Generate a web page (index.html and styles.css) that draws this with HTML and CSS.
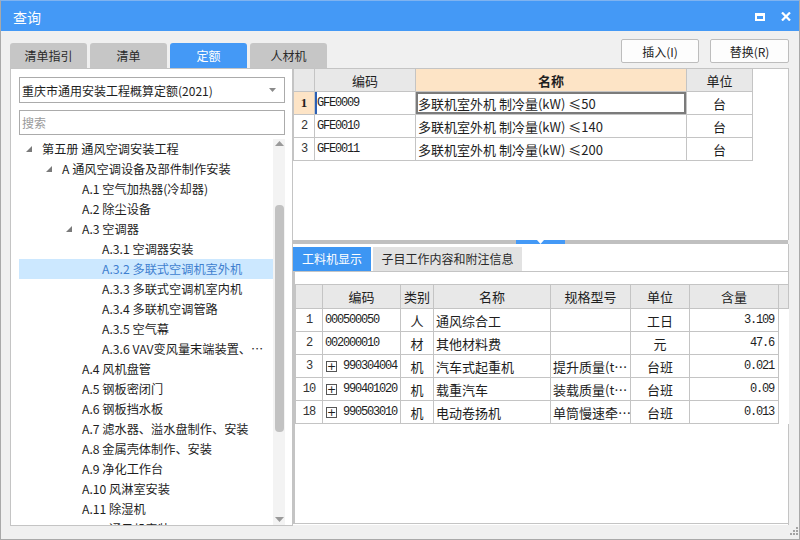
FILE: index.html
```html
<!DOCTYPE html>
<html lang="zh">
<head>
<meta charset="utf-8">
<title>查询</title>
<link rel="stylesheet" href="styles.css">
</head>
<body>
<div class="window">
  <div class="titlebar">
    <span class="title">查询</span>
    <div class="title-icons">
      <svg class="ico-max" width="10" height="8" viewBox="0 0 10 8"><rect x="0" y="0" width="10" height="8" fill="#fff"/><rect x="2" y="3" width="6" height="3" fill="#4499f6"/></svg>
      <svg class="ico-close" width="10" height="9" viewBox="0 0 10 9"><path d="M1 0.5 L9 8.5 M9 0.5 L1 8.5" stroke="#fff" stroke-width="2.2" fill="none"/></svg>
    </div>
  </div>
  <div class="body">
    <div class="toprow">
      <div class="tabs">
        <div class="tab">清单指引</div>
        <div class="tab">清单</div>
        <div class="tab active">定额</div>
        <div class="tab">人材机</div>
      </div>
      <div class="buttons">
        <button class="btn btn-insert">插入(I)</button>
        <button class="btn btn-replace">替换(R)</button>
      </div>
    </div>
    <div class="main">
      <div class="left">
        <div class="select">
          <span>重庆市通用安装工程概算定额(2021)</span>
          <svg class="sel-arrow" width="7" height="4" viewBox="0 0 7 4"><path d="M0 0 H7 L3.5 4 Z" fill="#8a8a8a"/></svg>
        </div>
        <div class="search">搜索</div>
        <div class="tree">
          <div class="tree-list">
            <div class="node l0"><span class="tri"></span>第五册 通风空调安装工程</div>
            <div class="node l1"><span class="tri"></span>A 通风空调设备及部件制作安装</div>
            <div class="node l2">A.1 空气加热器(冷却器)</div>
            <div class="node l2">A.2 除尘设备</div>
            <div class="node l2"><span class="tri"></span>A.3 空调器</div>
            <div class="node l3">A.3.1 空调器安装</div>
            <div class="node l3 selected">A.3.2 多联式空调机室外机</div>
            <div class="node l3">A.3.3 多联式空调机室内机</div>
            <div class="node l3">A.3.4 多联机空调管路</div>
            <div class="node l3">A.3.5 空气幕</div>
            <div class="node l3">A.3.6 VAV变风量末端装置、…</div>
            <div class="node l2">A.4 风机盘管</div>
            <div class="node l2">A.5 钢板密闭门</div>
            <div class="node l2">A.6 钢板挡水板</div>
            <div class="node l2">A.7 滤水器、溢水盘制作、安装</div>
            <div class="node l2">A.8 金属壳体制作、安装</div>
            <div class="node l2">A.9 净化工作台</div>
            <div class="node l2">A.10 风淋室安装</div>
            <div class="node l2">A.11 除湿机</div>
            <div class="node l2">A.12 通风机安装</div>
          </div>
          <div class="vscroll">
            <svg class="sb-up" width="9" height="5" viewBox="0 0 9 5"><path d="M0 5 H9 L4.5 0 Z" fill="#9a9a9a"/></svg>
            <div class="sb-track"><div class="sb-thumb"></div></div>
            <svg class="sb-down" width="9" height="5" viewBox="0 0 9 5"><path d="M0 0 H9 L4.5 5 Z" fill="#9a9a9a"/></svg>
          </div>
        </div>
      </div>
      <div class="right">
        <div class="top-pane">
          <table class="grid qgrid">
            <colgroup><col class="q1"><col class="q2"><col class="q3"><col class="q4"></colgroup>
            <thead>
              <tr><th></th><th>编码</th><th class="hl">名称</th><th>单位</th></tr>
            </thead>
            <tbody>
              <tr><td class="no cur">1</td><td class="code focus">GFE0009</td><td class="name sel">多联机室外机 制冷量(kW) ≤50</td><td class="ctr">台</td></tr>
              <tr><td class="no">2</td><td class="code">GFE0010</td><td class="name">多联机室外机 制冷量(kW) ≤140</td><td class="ctr">台</td></tr>
              <tr><td class="no">3</td><td class="code">GFE0011</td><td class="name">多联机室外机 制冷量(kW) ≤200</td><td class="ctr">台</td></tr>
            </tbody>
          </table>
        </div>
        <div class="splitter"><div class="handle"><svg width="7" height="4" viewBox="0 0 7 4"><path d="M0 0 H7 L3.5 4 Z" fill="#fff"/></svg></div></div>
        <div class="bottom-pane">
          <div class="subtabs">
            <div class="subtab active">工料机显示</div>
            <div class="subtab">子目工作内容和附注信息</div>
          </div>
          <div class="frame">
            <table class="grid rgrid">
              <colgroup><col class="r1"><col class="r2"><col class="r3"><col class="r4"><col class="r5"><col class="r6"><col class="r7"><col class="r8"></colgroup>
              <thead>
                <tr><th></th><th>编码</th><th>类别</th><th>名称</th><th>规格型号</th><th>单位</th><th>含量</th><th class="filler-h"></th></tr>
              </thead>
              <tbody>
                <tr><td class="no">1</td><td class="code">000500050</td><td class="ctr">人</td><td class="name">通风综合工</td><td class="name"></td><td class="ctr">工日</td><td class="num">3.109</td><td class="filler"></td></tr>
                <tr><td class="no">2</td><td class="code">002000010</td><td class="ctr">材</td><td class="name">其他材料费</td><td class="name"></td><td class="ctr">元</td><td class="num">47.6</td><td class="filler"></td></tr>
                <tr><td class="no">3</td><td class="code"><span class="plus">+</span>990304004</td><td class="ctr">机</td><td class="name">汽车式起重机</td><td class="name">提升质量(t…</td><td class="ctr">台班</td><td class="num">0.021</td><td class="filler"></td></tr>
                <tr><td class="no">10</td><td class="code"><span class="plus">+</span>990401020</td><td class="ctr">机</td><td class="name">载重汽车</td><td class="name">装载质量(t…</td><td class="ctr">台班</td><td class="num">0.09</td><td class="filler"></td></tr>
                <tr><td class="no">18</td><td class="code"><span class="plus">+</span>990503010</td><td class="ctr">机</td><td class="name">电动卷扬机</td><td class="name">单筒慢速牵…</td><td class="ctr">台班</td><td class="num">0.013</td><td class="filler"></td></tr>
              </tbody>
            </table>
          </div>
        </div>
      </div>
    </div>
    <div class="statusbar">
      <svg class="grip" width="9" height="9" viewBox="0 0 9 9"><g fill="#a4a4a4"><rect x="7" y="0" width="2" height="2"/><rect x="4" y="3" width="2" height="2"/><rect x="7" y="3" width="2" height="2"/><rect x="1" y="6" width="2" height="2"/><rect x="4" y="6" width="2" height="2"/><rect x="7" y="6" width="2" height="2"/></g></svg>
    </div>
  </div>
</div>
</body>
</html>
```

FILE: styles.css
```css
html, body {
  margin: 0;
  padding: 0;
  background: #f0f0f0;
}

.window {
  width: 800px;
  height: 540px;
  box-sizing: border-box;
  border: 1px solid #a9a9a9;
  border-top-color: #7fb3f0;
  display: flex;
  flex-direction: column;
  background: #f0f0f0;
  font-family: "Noto Sans CJK SC", "Noto Sans", sans-serif;
  color: #1e1e1e;
  overflow: hidden;
}

/* title bar */
.titlebar {
  height: 30px;
  flex: none;
  background: #4499f6;
  color: #fff;
  display: flex;
  align-items: center;
  padding: 1px 8px 0 12px;
  box-sizing: border-box;
}
.title {
  font-size: 14px;
  line-height: 30px;
}
.title-icons {
  margin-left: auto;
  display: flex;
  align-items: center;
  gap: 16px;
}
.ico-max, .ico-close { display: block; }

/* body */
.body {
  flex: 1;
  display: flex;
  flex-direction: column;
  padding: 0 10px 0 9px;
  min-height: 0;
}

.toprow {
  height: 37px;
  flex: none;
  display: flex;
  justify-content: space-between;
}
.tabs {
  display: flex;
  align-items: flex-end;
}
.tab {
  width: 77px;
  height: 25px;
  margin-right: 3px;
  background: #c6c6c6;
  border-radius: 3px 3px 0 0;
  font-size: 12px;
  line-height: 25px;
  text-align: center;
  color: #2a2a2a;
}
.tab.active {
  background: #4499f6;
  color: #fff;
}
.buttons {
  display: flex;
  gap: 11px;
  padding-top: 8px;
}
.btn {
  height: 24px;
  background: #fdfdfd;
  border: 1px solid #bdbdbd;
  border-radius: 2px;
  font-family: "Noto Sans CJK SC", sans-serif;
  font-size: 12px;
  color: #1e1e1e;
  padding: 0;
}
.btn-insert { width: 78px; }
.btn-replace { width: 79px; }

/* main */
.main {
  height: 459px;
  flex: none;
  display: flex;
  align-items: flex-start;
}

.left {
  width: 283px;
  height: 458px;
  box-sizing: border-box;
  background: #fff;
  border: 1px solid #c4c4c4;
  display: flex;
  flex-direction: column;
  padding: 8px 7px 0 8px;
}
.select {
  height: 26px;
  box-sizing: border-box;
  border: 1px solid #ababab;
  display: flex;
  align-items: center;
  padding: 0 8px 0 2px;
  font-size: 12px;
  color: #1e1e1e;
}
.sel-arrow { margin-left: auto; }
.search {
  height: 25px;
  margin-top: 7px;
  box-sizing: border-box;
  border: 1px solid #ababab;
  padding-left: 2px;
  font-size: 12px;
  line-height: 23px;
  color: #9a9a9a;
}
.tree {
  flex: 1;
  margin-top: 4px;
  display: flex;
  min-height: 0;
}
.tree-list {
  flex: 1;
  overflow: hidden;
}
.node {
  height: 20px;
  display: flex;
  align-items: center;
  font-size: 12.2px;
  white-space: nowrap;
  color: #1e1e1e;
}
.node.l0 { padding-left: 23px; }
.node.l1 { padding-left: 43px; }
.node.l2 { padding-left: 63px; }
.node.l3 { padding-left: 83px; }
.node.selected {
  background: #cce8ff;
  color: #3f7fcf;
}
.tri {
  width: 0;
  height: 0;
  border-style: solid;
  border-width: 0 0 6px 6px;
  border-color: transparent transparent #7a7a7a transparent;
  margin-left: -16px;
  margin-right: 10px;
}

.vscroll {
  width: 12px;
  background: #f3f3f3;
  display: flex;
  flex-direction: column;
  align-items: center;
}
.sb-up { margin-top: 2px; flex: none; }
.sb-down { margin-bottom: 3px; flex: none; }
.sb-track {
  flex: 1;
  width: 100%;
  display: flex;
  justify-content: center;
}
.sb-thumb {
  width: 9px;
  height: 227px;
  margin-top: 59px;
  background: #c2c2c2;
  border-radius: 4px;
}

/* right */
.right {
  width: 496px;
  height: 457px;
  display: flex;
  flex-direction: column;
}
.top-pane {
  height: 172px;
  flex: none;
  box-sizing: border-box;
  background: #fff;
  border-top: 1px solid #c4c4c4;
  border-right: 1px solid #c4c4c4;
}
.splitter {
  height: 4px;
  flex: none;
  background: #c0c0c0;
  margin-right: 1px;
  position: relative;
}
.handle {
  position: absolute;
  left: 223px;
  top: 0;
  width: 49px;
  height: 4px;
  background: #4499f6;
  display: flex;
  justify-content: center;
}
.handle svg { display: block; }
.bottom-pane {
  flex: 1;
  background: #fff;
  display: flex;
  flex-direction: column;
  border-right: 1px solid #c4c4c4;
}
.subtabs {
  display: flex;
  gap: 2px;
  margin-top: 3px;
  height: 24px;
  flex: none;
}
.subtab {
  height: 24px;
  padding: 0;
  background: #e2e2e2;
  font-size: 12px;
  line-height: 24px;
  text-align: center;
  color: #2a2a2a;
}
.subtab.active {
  width: 78px;
  background: #3d96f3;
  color: #fff;
}
.subtab:not(.active) { width: 149px; }
.frame {
  flex: 1;
  border: 1px solid #c4c4c4;
  border-right: none;
  border-left-width: 2px;
  margin-bottom: 1px;
  padding-top: 12px;
  background: #fff;
}

/* grids */
.grid {
  border-collapse: collapse;
  table-layout: fixed;
  font-size: 13px;
}
.grid th, .grid td {
  border: 1px solid #c4c4c4;
  height: 22px;
  padding: 0 2px;
  white-space: nowrap;
  overflow: hidden;
}
.grid th {
  background: #e8e8e8;
  font-weight: normal;
  text-align: center;
  color: #1e1e1e;
}
.qgrid { width: 459px; }
.qgrid th { border-top: none; }
.q1 { width: 21px; }
.q2 { width: 101px; }
.q3 { width: 271px; }
.q4 { width: 66px; }
.qgrid th.hl {
  background: #fde4c6;
  font-weight: bold;
}
.grid td.no {
  text-align: center;
  font-family: "Liberation Mono", monospace;
  font-size: 12px;
  letter-spacing: -1px;
  color: #333;
}
.grid td.no.cur {
  background: #fde4c6;
  font-family: "Liberation Serif", serif;
  font-weight: bold;
  font-size: 13px;
  letter-spacing: 0;
  color: #1e1e1e;
}
.grid td.code {
  font-family: "Liberation Mono", monospace;
  font-size: 12px;
  letter-spacing: -1.2px;
  color: #1e1e1e;
}
.grid td.focus { box-shadow: inset 2px 0 0 #2b5fb4; }
.grid td.name { padding-left: 2px; }
.grid td.sel { box-shadow: inset 0 0 0 2px #7b7b7b; }
.grid td.ctr { text-align: center; }
.grid td.num {
  text-align: right;
  font-family: "Liberation Mono", monospace;
  font-size: 12px;
  letter-spacing: -1.2px;
  padding-right: 4px;
}

.rgrid { width: 493px; }
.r1 { width: 27px; }
.r2 { width: 78px; }
.r3 { width: 33px; }
.r4 { width: 117px; }
.r5 { width: 80px; }
.r6 { width: 59px; }
.r7 { width: 89px; }
.r8 { width: 10px; }
.rgrid th { height: 23px; }
.rgrid td.filler {
  border-top: none;
  border-right: none;
  border-bottom: none;
  background: #fff;
}
.plus {
  display: inline-block;
  width: 11px;
  height: 11px;
  box-sizing: border-box;
  border: 1px solid #555;
  font-family: "DejaVu Sans", sans-serif;
  font-size: 11px;
  line-height: 9px;
  text-align: center;
  letter-spacing: 0;
  margin: 0 6px 0 1px;
  vertical-align: -1px;
}

/* status bar */
.statusbar {
  flex: 1;
  display: flex;
  justify-content: flex-end;
  align-items: flex-start;
  margin-right: -9px;
  padding-top: 0;
}
.grip { display: block; margin-top: 0; }
```
